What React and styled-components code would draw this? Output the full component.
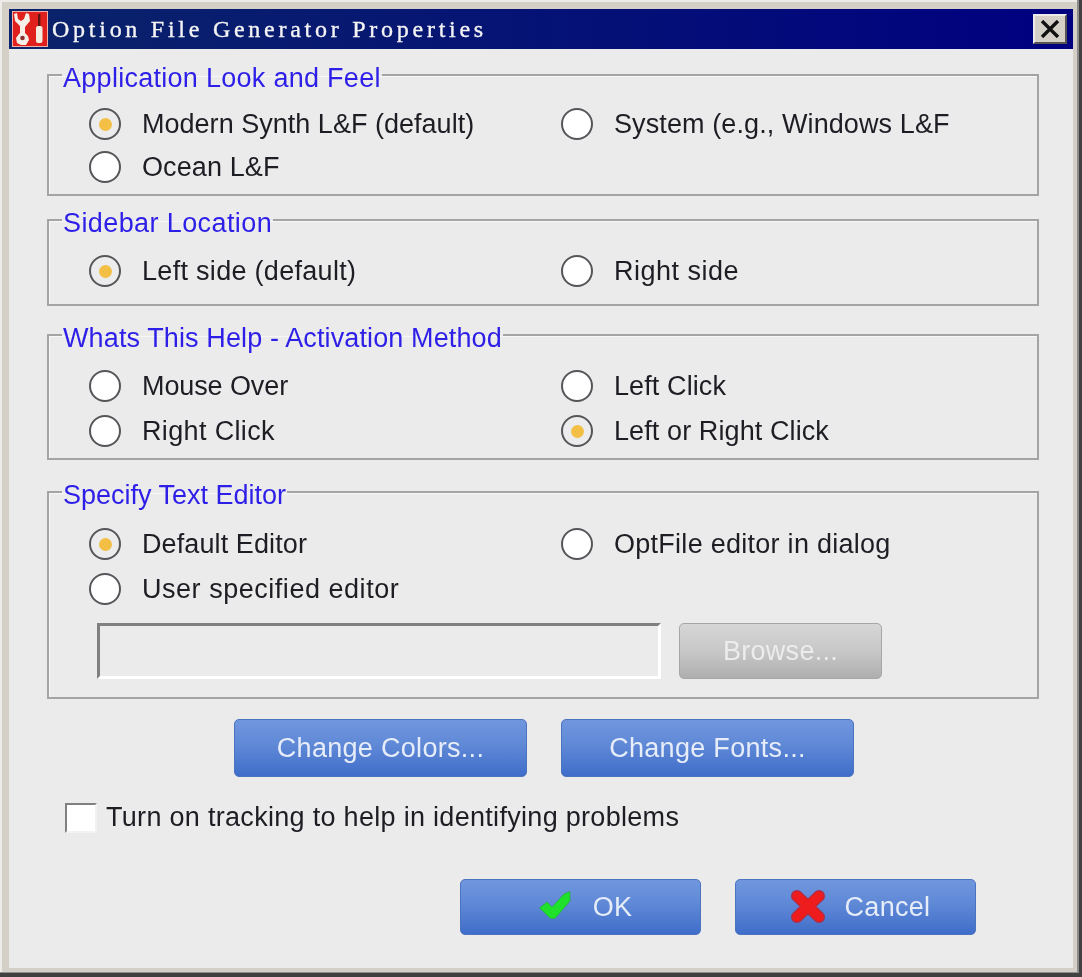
import React from 'react';
import styled, { createGlobalStyle } from 'styled-components';

const GlobalStyle = createGlobalStyle`
  html, body {
    margin: 0;
    padding: 0;
    background: #ebebeb;
  }
`;

const Frame = styled.div`
  box-sizing: border-box;
  width: 1082px;
  height: 977px;
  padding: 9px;
  background: #d4d0c8;
  box-shadow: inset -3px -4px 0 #404040, inset -5px -5px 0 #8c8c8c, inset 2px 2px 0 #eeece8;
  display: flex;
  flex-direction: column;
  font-family: "Liberation Sans", Arial, sans-serif;
  filter: blur(0.5px);
`;

const TitleBar = styled.div`
  flex: none;
  height: 40px;
  display: flex;
  align-items: center;
  background: linear-gradient(90deg, #0a246a, #000080);
`;

const AppIcon = styled.svg`
  flex: none;
  width: 36px;
  height: 36px;
  margin-left: 3px;
`;

const Title = styled.span`
  margin-left: 4px;
  font-family: "Liberation Serif", "Times New Roman", serif;
  font-size: 24px;
  letter-spacing: 3.74px;
  -webkit-text-stroke: 0.35px #f4f4f4;
  color: #f4f4f4;
`;

const CloseButton = styled.div`
  margin-left: auto;
  margin-right: 6px;
  width: 34px;
  height: 30px;
  box-sizing: border-box;
  display: flex;
  align-items: center;
  justify-content: center;
  background: #d4d0c8;
  border: 2px solid;
  border-color: #ecebe7 #55544f #55544f #ecebe7;
`;

const Body = styled.div`
  flex: 1;
  background: #ebebeb;
  padding: 0 34px 0 38px;
  display: flex;
  flex-direction: column;
`;

const Group = styled.fieldset`
  margin: ${p => p.$mt}px 0 0;
  padding: ${p => p.$pt}px 0 ${p => p.$pb}px;
  border: 2px solid #a4a4a4;
  box-shadow: inset 1px 1px 0 #f7f7f7;
  min-width: 0;
`;

const Legend = styled.legend`
  margin-left: 13px;
  padding: 6px 1px 0;
  font-size: 27px;
  line-height: 26px;
  letter-spacing: ${p => p.$track}px;
  color: #2d1fe8;
`;

const Options = styled.div`
  display: grid;
  grid-template-columns: 472px 1fr;
  grid-auto-rows: 42px;
  row-gap: ${p => p.$gap}px;
  margin-left: 40px;
`;

const Option = styled.div`
  display: flex;
  align-items: center;
  font-size: 27px;
  color: #1d1d24;
  letter-spacing: ${p => p.$track}px;
`;

const Radio = styled.span`
  flex: none;
  box-sizing: border-box;
  width: 32px;
  height: 32px;
  margin-right: 21px;
  border-radius: 50%;
  border: 2px solid #55555a;
  background: ${p => (p.$on ? '#ececec' : '#fff')};
  display: flex;
  align-items: center;
  justify-content: center;

  &::after {
    content: '';
    display: ${p => (p.$on ? 'block' : 'none')};
    width: 13px;
    height: 13px;
    border-radius: 50%;
    background: #f3bf45;
  }
`;

const EditorRow = styled.div`
  display: flex;
  align-items: center;
  margin: 13px 0 0 48px;
`;

const PathField = styled.div`
  box-sizing: border-box;
  width: 564px;
  height: 56px;
  background: #ebebeb;
  border: 3px solid;
  border-color: #808080 #fff #fff #808080;
`;

const ActionButton = styled.div`
  box-sizing: border-box;
  width: ${p => p.$w}px;
  height: ${p => p.$h}px;
  padding-left: ${p => p.$pl || 0}px;
  display: flex;
  align-items: center;
  justify-content: center;
  border-radius: 5px;
  border: 1px solid #4a73c0;
  background: linear-gradient(180deg, #7097de 0%, #5f88d6 45%, #3f6dc9 100%);
  font-size: 27px;
  letter-spacing: 0.3px;
  color: #e6edf9;
`;

const BrowseButton = styled(ActionButton)`
  margin-left: 18px;
  border-color: #a6a6a6;
  background: linear-gradient(180deg, #d6d6d6 0%, #c8c8c8 50%, #aeaeae 100%);
  color: #ececec;
`;

const CenterRow = styled.div`
  display: flex;
  justify-content: center;
  gap: 34px;
  margin: 20px 0 0 2px;
`;

const TrackingRow = styled.div`
  display: flex;
  align-items: center;
  margin: 25px 0 0 18px;
  font-size: 27px;
  letter-spacing: 0.3px;
  color: #1d1d24;
`;

const CheckBox = styled.span`
  box-sizing: border-box;
  width: 32px;
  height: 30px;
  margin-right: 9px;
  background: #fff;
  border: 2px solid;
  border-color: #808080 #f2f2f2 #f2f2f2 #808080;
`;

const FooterRow = styled.div`
  display: flex;
  justify-content: flex-end;
  gap: 34px;
  margin: 46px 63px 0 0;
`;

const ButtonIcon = styled.svg`
  width: 36px;
  height: 36px;
  margin-right: 19px;
`;

const ToolIcon = () => (
  <AppIcon viewBox="0 0 36 36">
    <rect x="0.5" y="0.5" width="35" height="35" fill="#e0201c" stroke="#f0b0a8" />
    <path d="M2 3l3-1 1 6 3 2 3-2 2-6 3 1 1 7-5 6v6l3 3 1 4-3 5H9l-4-2-1-5 3-4 1-1v-7L3 10z" fill="#f6efe8" />
    <circle cx="10.5" cy="27" r="2.3" fill="#8a3030" />
    <rect x="26" y="3" width="2.4" height="12" fill="#5c1414" />
    <rect x="24" y="15" width="6.5" height="17" rx="2" fill="#f2ece0" />
  </AppIcon>
);

const CheckIcon = () => (
  <ButtonIcon viewBox="0 0 36 36">
    <path d="M1.500 19L9 13l5 5L26 5l6-2.500V12L17 29.500h-4.500z" fill="#1fe02a" stroke="#2aa84a" strokeWidth="0.8" strokeLinejoin="round" />
  </ButtonIcon>
);

const CrossIcon = () => (
  <ButtonIcon viewBox="0 0 36 36">
    <path d="M7 7l22 21M29 7L7 28" stroke="#a8304a" strokeWidth="12" strokeLinecap="round" fill="none" />
    <path d="M7 7l22 21M29 7L7 28" stroke="#ee1c1c" strokeWidth="9.500" strokeLinecap="round" fill="none" />
  </ButtonIcon>
);

const RadioOption = ({ on, track = 0.1, children }) => (
  <Option $track={track}>
    <Radio $on={on} />
    {children}
  </Option>
);

const App = () => (
  <>
    <GlobalStyle />
    <Frame>
      <TitleBar>
        <ToolIcon />
        <Title>Option File Generator Properties</Title>
        <CloseButton>
          <svg width="22" height="18" viewBox="0 0 22 18">
            <path d="M3 1l16 16M19 1L3 17" stroke="#111" strokeWidth="3.4" fill="none" />
          </svg>
        </CloseButton>
      </TitleBar>
      <Body>
        <Group $mt={10} $pt={12} $pb={6}>
          <Legend $track={0.28}>Application Look and Feel</Legend>
          <Options $gap={1}>
            <RadioOption on track={0.02}>Modern Synth L&amp;F (default)</RadioOption>
            <RadioOption>System (e.g., Windows L&amp;F</RadioOption>
            <RadioOption>Ocean L&amp;F</RadioOption>
          </Options>
        </Group>
        <Group $mt={8} $pt={14} $pb={12}>
          <Legend $track={0.4}>Sidebar Location</Legend>
          <Options $gap={0}>
            <RadioOption on track={0.3}>Left side (default)</RadioOption>
            <RadioOption track={0.5}>Right side</RadioOption>
          </Options>
        </Group>
        <Group $mt={13} $pt={14} $pb={6}>
          <Legend $track={0.12}>Whats This Help - Activation Method</Legend>
          <Options $gap={3}>
            <RadioOption track={-0.1}>Mouse Over</RadioOption>
            <RadioOption>Left Click</RadioOption>
            <RadioOption track={0.35}>Right Click</RadioOption>
            <RadioOption on>Left or Right Click</RadioOption>
          </Options>
        </Group>
        <Group $mt={16} $pt={15} $pb={18}>
          <Legend $track={0}>Specify Text Editor</Legend>
          <Options $gap={3}>
            <RadioOption on>Default Editor</RadioOption>
            <RadioOption track={0.27}>OptFile editor in dialog</RadioOption>
            <RadioOption track={0.53}>User specified editor</RadioOption>
          </Options>
          <EditorRow>
            <PathField />
            <BrowseButton $w={203} $h={56}>Browse...</BrowseButton>
          </EditorRow>
        </Group>
        <CenterRow>
          <ActionButton $w={293} $h={58}>Change Colors...</ActionButton>
          <ActionButton $w={293} $h={58}>Change Fonts...</ActionButton>
        </CenterRow>
        <TrackingRow>
          <CheckBox />
          Turn on tracking to help in identifying problems
        </TrackingRow>
        <FooterRow>
          <ActionButton $w={241} $h={56} $pl={9}><CheckIcon />OK</ActionButton>
          <ActionButton $w={241} $h={56} $pl={9}><CrossIcon />Cancel</ActionButton>
        </FooterRow>
      </Body>
    </Frame>
  </>
);

export default App;
